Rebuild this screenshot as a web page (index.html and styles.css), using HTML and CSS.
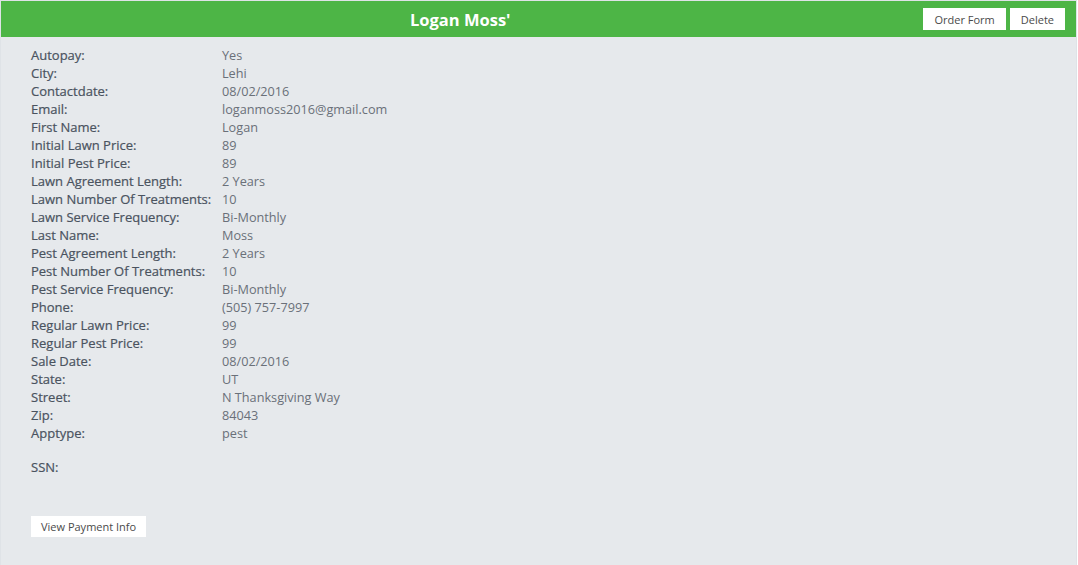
FILE: index.html
```html
<!DOCTYPE html>
<html>
<head>
    <title>Logan Moss'</title>
    <link rel="stylesheet" href="styles.css">
</head>
<body>
    <div class="panel">
        <div class="topbar">
            <h1 class="title">Logan Moss'</h1>
            <div class="actions">
                <button type="button" class="btn">Order Form</button>
                <button type="button" class="btn">Delete</button>
            </div>
        </div>

        <div class="details">
            <dl class="fields">
                <dt>Autopay:</dt><dd>Yes</dd>
                <dt>City:</dt><dd>Lehi</dd>
                <dt>Contactdate:</dt><dd>08/02/2016</dd>
                <dt>Email:</dt><dd>loganmoss2016@gmail.com</dd>
                <dt>First Name:</dt><dd>Logan</dd>
                <dt>Initial Lawn Price:</dt><dd>89</dd>
                <dt>Initial Pest Price:</dt><dd>89</dd>
                <dt>Lawn Agreement Length:</dt><dd>2 Years</dd>
                <dt>Lawn Number Of Treatments:</dt><dd>10</dd>
                <dt>Lawn Service Frequency:</dt><dd>Bi-Monthly</dd>
                <dt>Last Name:</dt><dd>Moss</dd>
                <dt>Pest Agreement Length:</dt><dd>2 Years</dd>
                <dt>Pest Number Of Treatments:</dt><dd>10</dd>
                <dt>Pest Service Frequency:</dt><dd>Bi-Monthly</dd>
                <dt>Phone:</dt><dd>(505) 757-7997</dd>
                <dt>Regular Lawn Price:</dt><dd>99</dd>
                <dt>Regular Pest Price:</dt><dd>99</dd>
                <dt>Sale Date:</dt><dd>08/02/2016</dd>
                <dt>State:</dt><dd>UT</dd>
                <dt>Street:</dt><dd>N Thanksgiving Way</dd>
                <dt>Zip:</dt><dd>84043</dd>
                <dt>Apptype:</dt><dd>pest</dd>
            </dl>

            <dl class="fields ssn">
                <dt>SSN:</dt><dd></dd>
            </dl>

            <button type="button" class="btn payment">View Payment Info</button>
        </div>
    </div>
</body>
</html>
```

FILE: styles.css
```css
/* General body styles */
body {
    font-family: 'Open Sans', sans-serif;
    margin: 0;
    background-color: #ffffff;
}

/* Outer panel */
.panel {
    width: 1075px;
    min-height: 580px;
    border: 1px solid #dfe3e7;
    border-bottom: none;
    background-color: #e6e9ec;
}

/* Green title bar */
.topbar {
    display: flex;
    align-items: center;
    height: 36px;
    background-color: #4db546;
}

.title {
    flex: 1;
    margin: 0;
    padding-right: 4px;
    text-align: center;
    color: #ffffff;
    font-size: 16.5px;
    font-weight: 700;
}

.actions {
    display: flex;
    gap: 4px;
    padding-right: 11px;
}

/* Button styles */
.btn {
    font-family: 'Open Sans', sans-serif;
    font-size: 11px;
    color: #4a4a4a;
    background-color: #ffffff;
    border: none;
    height: 22px;
    padding: 0 11px;
    cursor: pointer;
}

/* Field list */
.details {
    padding: 9px 30px 0 30px;
}

.fields {
    display: grid;
    grid-template-columns: 191px auto;
    margin: 0;
    font-size: 12.7px;
    line-height: 18px;
}

.fields dt {
    font-size: 13px;
    color: #4a535f;
    font-weight: 500;
    -webkit-text-stroke: 0.2px #4a535f;
}

.fields dd {
    margin: 0;
    color: #6a7079;
}

.ssn {
    margin-top: 16px;
}

.payment {
    margin-top: 40px;
    height: 21px;
    padding: 0 10px;
}
```
